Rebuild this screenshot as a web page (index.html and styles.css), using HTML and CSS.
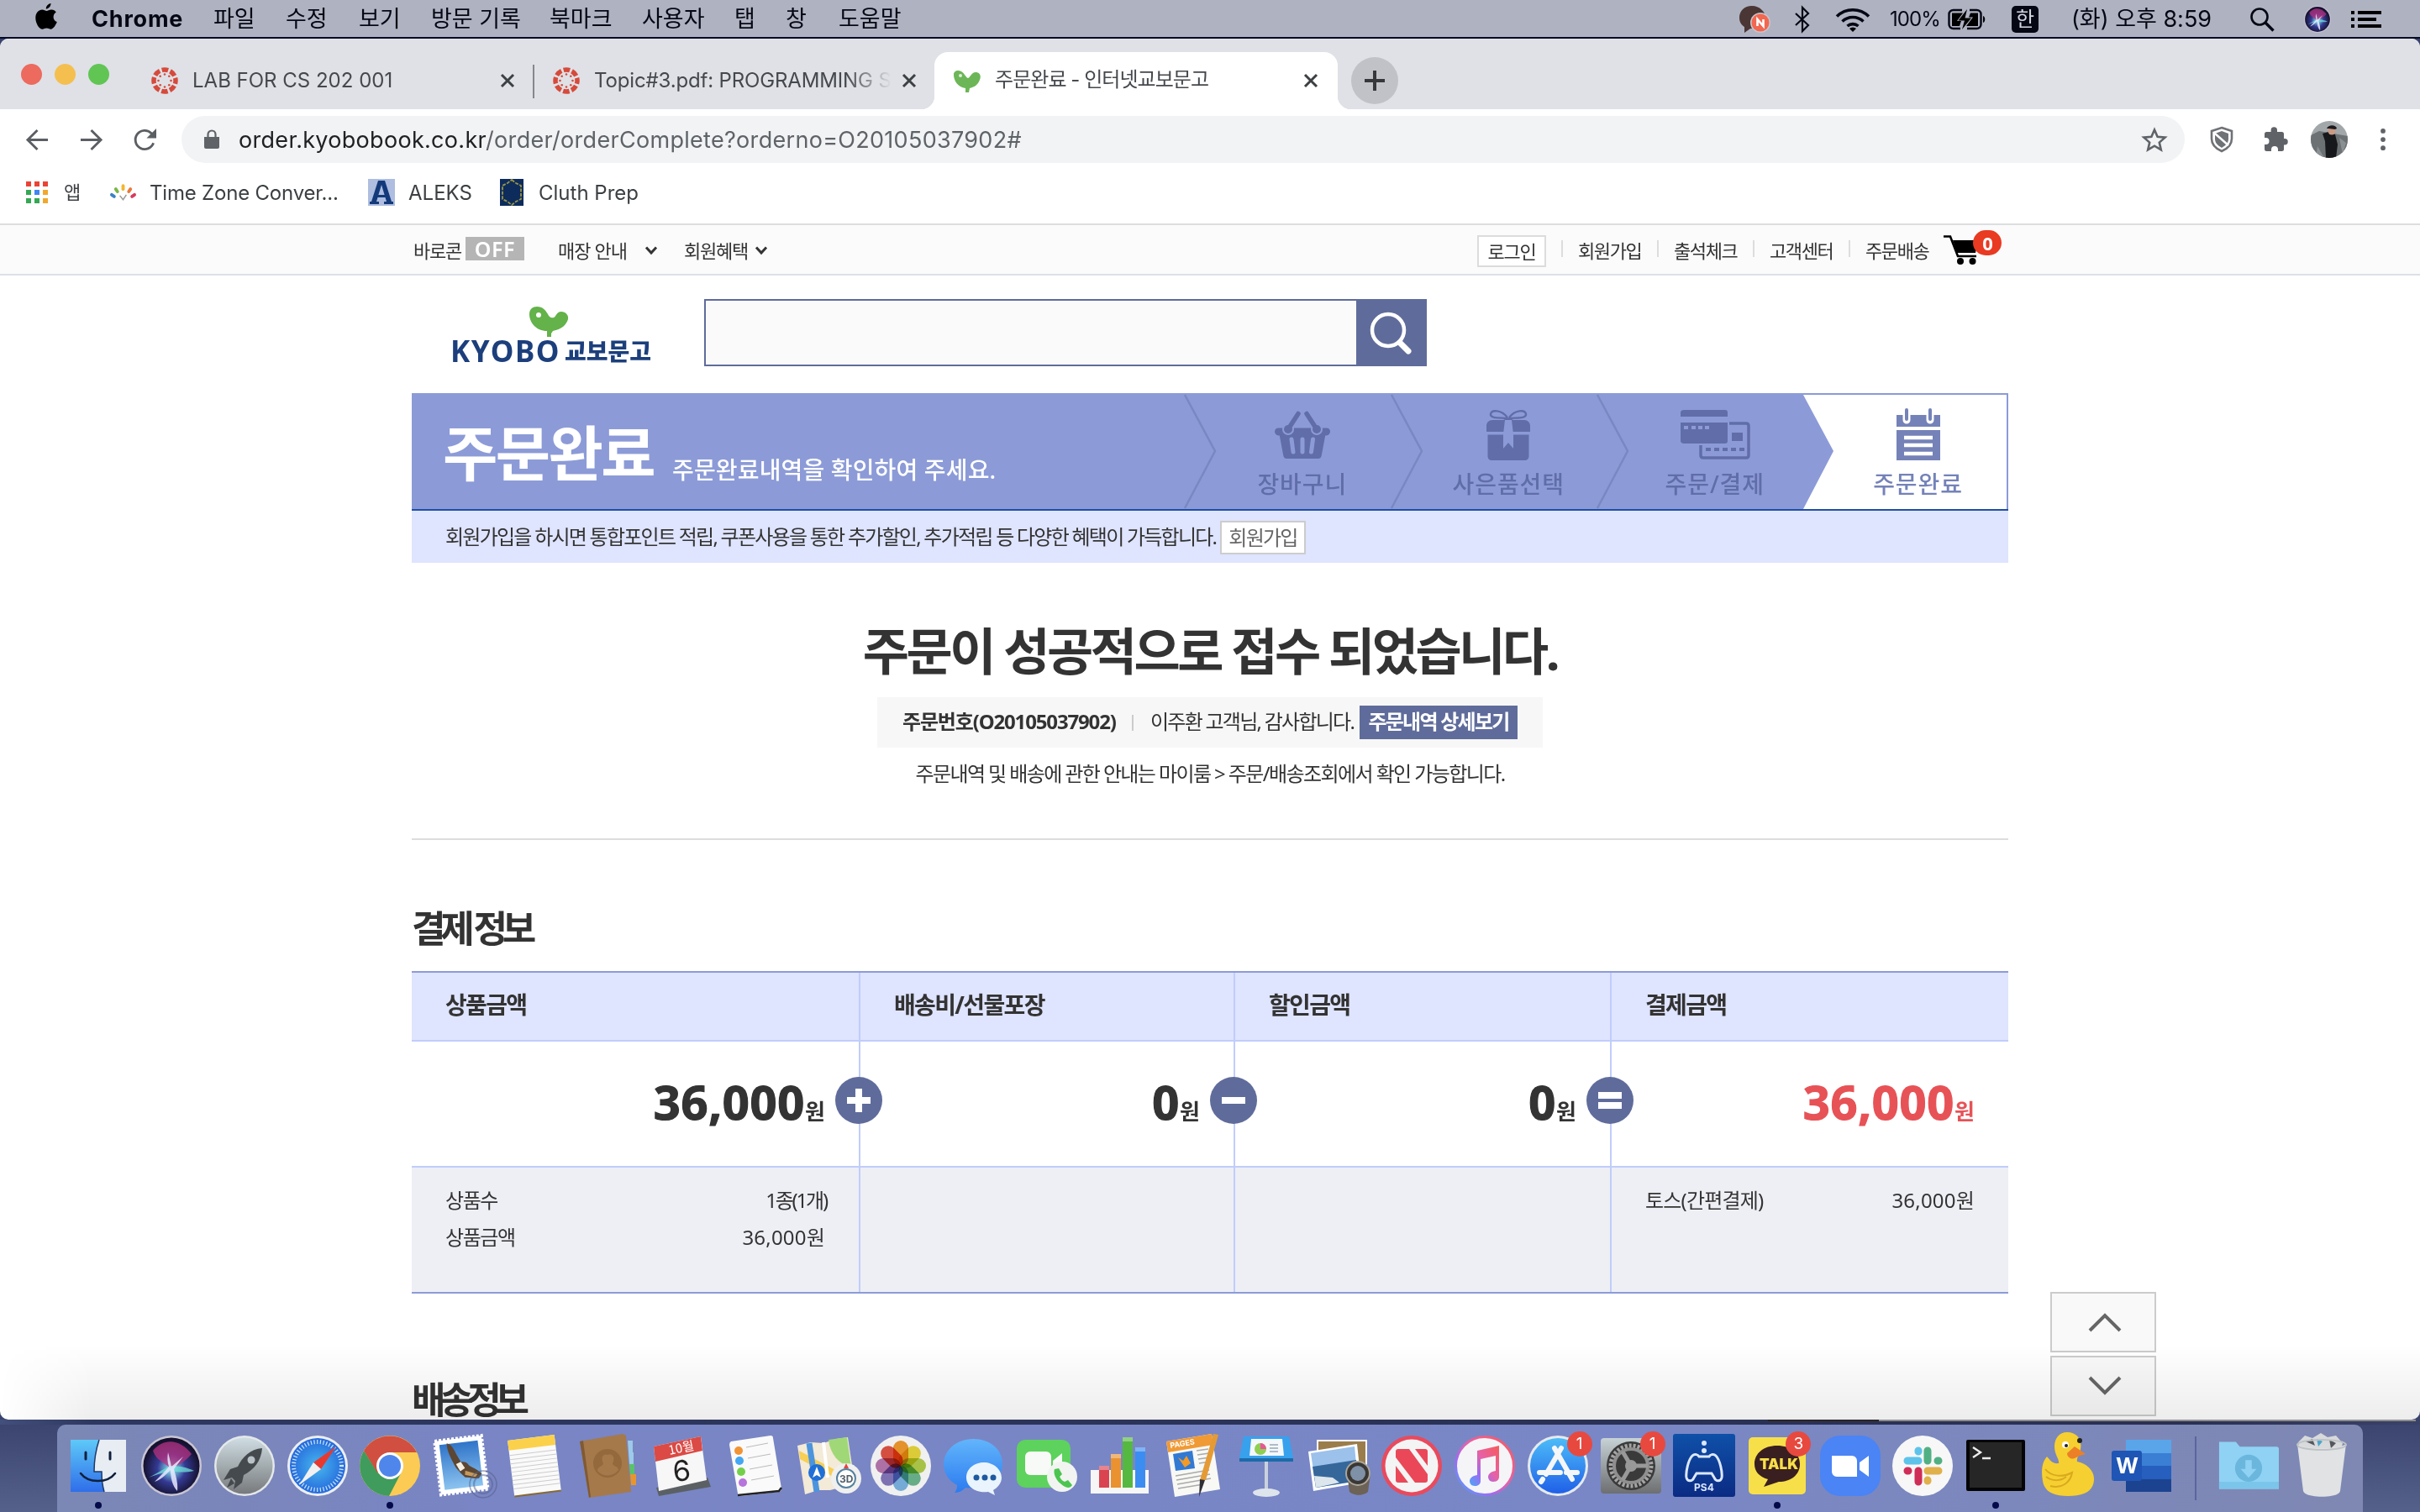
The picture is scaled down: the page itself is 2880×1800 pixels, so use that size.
FILE: index.html
```html
<!DOCTYPE html>
<html lang="ko">
<head>
<meta charset="utf-8">
<title>주문완료 - 인터넷교보문고</title>
<link rel="stylesheet" href="styles.css">
</head>
<body>
<header class="menubar">
  <svg class="apple" viewBox="0 0 26 32"><path d="M18.500 0c.3 3-2.600 6.600-5.700 6.600C12.500 3.500 15.500.4 18.500 0zM13.500 9c1.300 0 3.300-1.700 6-1.500 2.100.1 4.100 1.100 5.300 2.900-4.800 3-4 9.700 1 11.700-1.200 3.500-4.300 8.700-7.300 8.700-2 0-2.900-1.200-5-1.200-2.200 0-3.200 1.200-5 1.200C4.500 30.800.3 23.500.3 17.500.3 11 4.400 7.600 8.100 7.600c2.200 0 4 1.400 5.400 1.400z"/></svg>
  <nav class="menus">
    <b>Chrome</b><span>파일</span><span>수정</span><span>보기</span><span>방문 기록</span><span>북마크</span><span>사용자</span><span>탭</span><span>창</span><span>도움말</span>
  </nav>
  <div class="status">
    <svg class="st-talk" viewBox="0 0 38 34"><path d="M15 1C6 1 0 7 0 15c0 6 3 9 6 11v7l7-5h5c8 0 13-6 13-13S24 1 15 1z" fill="#4a3634"/><circle cx="25" cy="21" r="12" fill="#c9c5cc"/><circle cx="25" cy="21" r="10.500" fill="#f26750"/><path d="M21.500 25v-8l7 8v-8" fill="none" stroke="#fff" stroke-width="2.600"/></svg>
    <svg class="st-bt" viewBox="0 0 20 32"><path d="M2 9l15 14-7 7V2l7 7L2 23" fill="none" stroke="#050714" stroke-width="2.200"/></svg>
    <svg class="st-wifi" viewBox="0 0 42 30"><g fill="none" stroke="#050714" stroke-width="3.600"><path d="M2 11.500a27 27 0 0 1 38 0"/><path d="M8.500 17.500a18 18 0 0 1 25 0"/><path d="M14.500 23a10 10 0 0 1 13 0"/></g><path d="M17 26l4 4 4-4a6 6 0 0 0-8 0z"/></svg>
    <span class="st-pct">100%</span>
    <svg class="st-bat" viewBox="0 0 46 26"><path d="M17 2H6.500a5 5 0 0 0-5 5v12a5 5 0 0 0 5 5H15M26 2h8.500a5 5 0 0 1 5 5v12a5 5 0 0 1-5 5H23" fill="none" stroke="#050714" stroke-width="2.400"/><path d="M42 9v8c3-1 3-7 0-8z"/><path d="M5 5.500h13L11 15h5l-2 6H5zM36 5.500H27l-2 5h5L22 21h14z"/><path d="M23 1L12.500 14.500H20L17 25l11-13.500h-7.500z"/></svg>
    <span class="st-han">한</span>
    <span class="st-time">(화) 오후 8:59</span>
    <svg class="st-find" viewBox="0 0 32 30"><circle cx="12" cy="12" r="9.500" fill="none" stroke="#050714" stroke-width="2.600"/><path d="M19 19l9.500 9.500" stroke="#050714" stroke-width="3.400"/></svg>
    <svg class="st-siri" viewBox="0 0 72 72"><use href="#siri"/></svg>
    <svg class="st-list" viewBox="0 0 36 22"><path d="M0 1h4v4H0zM8 1h28v4H8zM0 9h4v4H0zM8 9h22v4H8zM0 17h4v4H0zM8 17h28v4H8z"/></svg>
  </div>
</header>

<main class="window">
  <div class="tabstrip">
    <div class="lights"><i class="red"></i><i class="amber"></i><i class="green"></i></div>
    <div class="tab tab-a">
      <svg class="fav" viewBox="0 0 32 32"><use href="#canvas-ring"/></svg>
      <span class="tab-t">LAB FOR CS 202 001</span>
      <svg class="x" viewBox="0 0 18 18"><path d="M2 2l14 14M16 2L2 16"/></svg>
    </div>
    <div class="tab tab-b">
      <svg class="fav" viewBox="0 0 32 32"><use href="#canvas-ring"/></svg>
      <span class="tab-t">Topic#3.pdf: PROGRAMMING S</span>
      <svg class="x" viewBox="0 0 18 18"><path d="M2 2l14 14M16 2L2 16"/></svg>
    </div>
    <div class="tab tab-on">
      <svg class="fav" viewBox="0 0 32 32"><use href="#sprout"/></svg>
      <span class="tab-t">주문완료 - 인터넷교보문고</span>
      <svg class="x" viewBox="0 0 18 18"><path d="M2 2l14 14M16 2L2 16"/></svg>
    </div>
    <div class="newtab"><svg viewBox="0 0 24 24"><path d="M12 0v24M0 12h24"/></svg></div>
  </div>
  <div class="toolbar">
    <svg class="tb-back" viewBox="0 0 28 28"><path d="M27 14H3M14 2L2 14l12 12"/></svg>
    <svg class="tb-fwd" viewBox="0 0 28 28"><path d="M1 14h24M14 2l12 12-12 12"/></svg>
    <svg class="tb-load" viewBox="0 0 28 28"><path d="M24.500 18A11.500 11.500 0 1 1 22 6l4 4"/><path class="fill" d="M28 0v12H16z"/></svg>
    <div class="omnibox">
      <svg class="lock" viewBox="0 0 18 24"><path d="M0 9h18v12a2 2 0 0 1-2 2H2a2 2 0 0 1-2-2z" fill="#5f6368"/><path d="M4.500 10V6a4.500 4.500 0 0 1 9 0v4" fill="none" stroke="#5f6368" stroke-width="2.200"/></svg>
      <span class="url"><span class="host">order.kyobobook.co.kr</span><span class="path">/order/orderComplete?orderno=O20105037902#</span></span>
      <svg class="star" viewBox="0 0 30 28"><path d="M15 2.500l3.600 8.300 9 .8-6.800 6 2 8.800-7.800-4.700-7.800 4.700 2-8.800-6.800-6 9-.8z"/></svg>
    </div>
    <svg class="tb-shield" viewBox="0 0 30 32"><path d="M15 2l12 4v9c0 7-5 12-12 15C8 27 3 22 3 15V6z" fill="none" stroke="#6f7276" stroke-width="2.600"/><path d="M15 6l8 3v6c0 5-3 8-8 11-5-3-8-6-8-11V9z" fill="#6f7276"/><path d="M7 9l16 14" stroke="#fff" stroke-width="2.500"/></svg>
    <svg class="tb-puz" viewBox="0 0 30 30"><path d="M25 14h-1V8.500A2.500 2.500 0 0 0 21.500 6H16V4a3.700 3.700 0 0 0-7.400 0v2H3.500A2.500 2.500 0 0 0 1 8.500V13h1.500a4 4 0 0 1 0 8H1v5.500A2.500 2.500 0 0 0 3.500 29H9v-2a4 4 0 0 1 8 0v2h4.500a2.500 2.500 0 0 0 2.500-2.500v-5h1a3.700 3.700 0 0 0 0-7.500z" fill="#5f6368"/></svg>
    <svg class="tb-ava" viewBox="0 0 44 44"><defs><clipPath id="ac"><circle cx="22" cy="22" r="22"/></clipPath></defs><g clip-path="url(#ac)"><path fill="#a2a7a9" d="M0 0h44v44H0z"/><path fill="#6c7174" d="M0 17l10-5 34 6v26H0z"/><path d="M8 30l8 14H6zM34 20l8 6-4 14z" fill="#8b9093"/><path d="M14 15l7-2 8 3 3 12-2 16H18l-1-20z" fill="#17181b"/><circle cx="25" cy="12" r="4.500" fill="#c99a86"/><path d="M19 9c2-5 11-5 12 0l-2 1-8-1z" fill="#1b1a1d"/></g></svg>
    <svg class="tb-dots" viewBox="0 0 6 28"><circle cx="3" cy="3" r="3"/><circle cx="3" cy="13.500" r="3"/><circle cx="3" cy="24" r="3"/></svg>
  </div>
  <div class="bookmarks">
    <svg class="bm-apps" viewBox="0 0 26 26"><path fill="#ea4335" d="M0 0h6v6H0zM10 0h6v6h-6zM20 0h6v6h-6z"/><path fill="#34a853" d="M0 10h6v6H0zM0 20h6v6H0z"/><path fill="#4285f4" d="M10 10h6v6h-6z"/><path fill="#34a853" d="M10 20h6v6h-6z"/><path fill="#f0a92e" d="M20 10h6v6h-6zM20 20h6v6h-6z"/></svg>
    <span class="bm-t1">앱</span>
    <svg class="bm-tz" viewBox="0 0 32 20"><g stroke-width="4" stroke-linecap="round"><path stroke="#3b82c4" d="M2 13l3 2"/><path stroke="#7ab648" d="M7 6l2 3"/><path stroke="#f2b632" d="M16 2v4"/><path stroke="#e9793a" d="M25 6l-2 3"/><path stroke="#d73b5e" d="M30 13l-3 2"/></g><path d="M12 14l4 5 4-6" fill="none" stroke="#999" stroke-width="1.500"/></svg>
    <span class="bm-t2">Time Zone Conver...</span>
    <svg class="bm-al" viewBox="0 0 32 32"><path fill="#aebde0" d="M0 0h32v32H0z"/><path fill="#143a7b" fill-rule="evenodd" d="M12 2h8l8 25h2v3H19v-3h3l-1.500-5h-9L10 27h3v3H2v-3h2zM16 7l-3.600 12h7.200z"/></svg>
    <span class="bm-t3">ALEKS</span>
    <svg class="bm-cl" viewBox="0 0 28 32"><path fill="#0d2c5c" d="M0 0h28v32H0z"/><path d="M14 1l5 4 6 3v16l-6 3-5 4-5-4-6-3V8l6-3z" fill="#0d2c5c" stroke="#9a9546" stroke-width="1.800" stroke-dasharray="4 1.500"/></svg>
    <span class="bm-t4">Cluth Prep</span>
  </div>

  <div class="page">
    <div class="util">
      <div class="wrap util-row">
        <div class="util-l">
          <span class="u1">바로콘</span><span class="off">OFF</span>
          <span class="u2">매장 안내</span><svg class="chev c1" viewBox="0 0 16 10"><path d="M2 1.500l6 6.500 6-6.500"/></svg>
          <span class="u3">회원혜택</span><svg class="chev c2" viewBox="0 0 16 10"><path d="M2 1.500l6 6.500 6-6.500"/></svg>
        </div>
        <div class="util-r">
          <span class="login">로그인</span><i></i><span class="ut">회원가입</span><i></i><span class="ut">출석체크</span><i></i><span class="ut">고객센터</span><i></i><span class="ut">주문배송</span>
          <div class="cart"><svg viewBox="0 0 44 36"><path d="M0 1.500h8L17 25h22" fill="none" stroke="#000" stroke-width="2.600"/><path d="M11 6h30l-3 15H16z"/><circle cx="20" cy="31" r="4"/><circle cx="34.500" cy="31" r="4"/></svg><b>0</b></div>
        </div>
      </div>
    </div>

    <div class="wrap head">
      <div class="logo">
        <svg class="bird" viewBox="0 0 46 36"><path d="M0 9C0 3 4 0 9 0c7 0 10 4 13 9 2 4 4 5 7 4 3-1 3-7 9-7 5 0 9 4 8 9-2 7-8 12-18 14l-2 3v4h-5v-7C8 29 0 19 0 9z" fill="#63b24a"/><circle cx="11" cy="10" r="3" fill="#fff"/></svg>
        <div class="wordmark"><b class="w1">KYOBO</b><b class="w2">교보문고</b></div>
      </div>
      <div class="search"><div class="field"></div><div class="go"><svg viewBox="0 0 52 52"><circle cx="22" cy="22" r="19" fill="none" stroke="#fff" stroke-width="4.500"/><path d="M36 37l10 10" stroke="#fff" stroke-width="7" stroke-linecap="round"/></svg></div></div>
    </div>

    <div class="wrap banner">
      <div class="ban-t"><b>주문완료</b><span>주문완료내역을 확인하여 주세요.</span></div>
      <div class="step"><svg class="arrow" viewBox="0 0 40 138"><path d="M1 2l36 67L1 137"/></svg>
        <svg class="s-ic" viewBox="0 0 82 60"><path d="M12.500 21.500h57c6 0 6 8.500 0 9h-1.300l-4.500 24c-.5 2.500-2 3.500-4 3.500H22.300c-2 0-3.500-1-4-3.500l-4.500-24h-1.300c-6-.5-6-9 0-9z" fill="#606da8"/><circle cx="24" cy="23" r="7" fill="#8c9bd7"/><circle cx="58" cy="23" r="7" fill="#8c9bd7"/><path d="M36 4.500L24 23M46 4.500L58 23" stroke="#606da8" stroke-width="5.500" stroke-linecap="round"/><circle cx="24" cy="23" r="5" fill="#606da8"/><circle cx="58" cy="23" r="5" fill="#606da8"/><path d="M28 35l2 15M41 35v15M53.500 35l-2 15" stroke="#8c9bd7" stroke-width="5" stroke-linecap="round"/></svg>
        <span class="sl">장바구니</span></div>
      <div class="step"><svg class="arrow" viewBox="0 0 40 138"><path d="M1 2l36 67L1 137"/></svg>
        <svg class="s-ic" viewBox="0 0 82 60"><path d="M40 10C34 9 19 11 20 5 21-1 33 0 40 9M42 10C48 9 63 11 62 5 61-1 49 0 42 9" fill="none" stroke="#606da8" stroke-width="2.400"/><path d="M22 12h13l6-3 6 3h13c4 0 7 3 7 7v7H15v-7c0-4 3-7 7-7zM16.500 29.500h49V55c0 3-2 5-5 5h-39c-3 0-5-2-5-5z" fill="#606da8"/><path d="M37 12h8l2 17v17l-6-7-6 7V29z" fill="#8c9bd7"/></svg>
        <span class="sl">사은품선택</span></div>
      <div class="step"><svg class="arrow" viewBox="0 0 40 138"><path d="M1 2l36 67L1 137"/></svg>
        <svg class="s-ic" viewBox="0 0 82 60"><path d="M4 0h49c2 0 3 1 3 3v5H0V3c0-2 2-3 4-3zM0 15h56v22c0 2-1 3-3 3H4c-2 0-4-1-4-3z" fill="#606da8"/><path d="M4 21h5M13 21h5M21 21h5M29 21h5" stroke="#8c9bd7" stroke-width="4"/><path d="M58 16h20c2 0 3 1 3 3v35c0 2-1 3-3 3H27c-2 0-3-1-3-3V42" fill="none" stroke="#606da8" stroke-width="3.500"/><path d="M61 27h13v10H61z" fill="#606da8"/><path d="M30 47h46" stroke="#606da8" stroke-width="4" stroke-dasharray="6 4"/></svg>
        <span class="sl">주문/결제</span></div>
      <div class="step on"><svg class="arrow-on" viewBox="0 0 244 138"><path d="M0 2h242v136H0l36-69z" fill="#fff"/></svg>
        <svg class="s-ic" viewBox="0 0 82 60"><path d="M15 6h52v14H15zM15 24h52v36H15z" fill="#7482b8"/><path d="M27 0v12M55 0v12" stroke="#fff" stroke-width="9" stroke-linecap="round"/><path d="M27 0v11M55 0v11" stroke="#7482b8" stroke-width="4" stroke-linecap="round"/><path d="M24 33h34M24 42h34M24 52h34" stroke="#fff" stroke-width="4.500"/></svg>
        <span class="sl">주문완료</span></div>
    </div>
    <div class="wrap notice"><span>회원가입을 하시면 통합포인트 적립, 쿠폰사용을 통한 추가할인, 추가적립 등 다양한 혜택이 가득합니다.</span><a>회원가입</a></div>

    <div class="wrap done">
      <h1>주문이 성공적으로 접수 되었습니다.</h1>
      <div class="order"><b class="no">주문번호(O20105037902)</b><i></i><span class="thx">이주환 고객님, 감사합니다.</span><b class="detail">주문내역 상세보기</b></div>
      <p>주문내역 및 배송에 관한 안내는 마이룸 &gt; 주문/배송조회에서 확인 가능합니다.</p>
    </div>

    <h2 class="wrap h-pay">결제 정보</h2>
    <div class="wrap pay">
      <div class="th">상품금액</div><div class="th">배송비/선물포장</div><div class="th">할인금액</div><div class="th">결제금액</div>
      <div class="sum"><b class="num">36,000</b><b class="won">원</b><svg class="op" viewBox="0 0 56 56"><circle cx="28" cy="28" r="28"/><path d="M14 28h28M28 14v28"/></svg></div>
      <div class="sum"><b class="num">0</b><b class="won">원</b><svg class="op" viewBox="0 0 56 56"><circle cx="28" cy="28" r="28"/><path d="M14 28h28"/></svg></div>
      <div class="sum"><b class="num">0</b><b class="won">원</b><svg class="op" viewBox="0 0 56 56"><circle cx="28" cy="28" r="28"/><path d="M14 22h28M14 34h28"/></svg></div>
      <div class="sum total"><b class="num">36,000</b><b class="won">원</b></div>
      <div class="det"><p><span>상품수</span><span class="qty">1종(1개)</span></p><p><span>상품금액</span><span class="amt">36,000원</span></p></div>
      <div class="det"></div><div class="det"></div>
      <div class="det"><p><span class="toss">토스(간편결제)</span><span class="amt">36,000원</span></p></div>
    </div>
    <h2 class="wrap h-ship">배송정보</h2>
    <div class="jump"><a><svg viewBox="0 0 40 24"><path d="M2 22L20 4l18 18"/></svg></a><a><svg viewBox="0 0 40 24"><path d="M2 2l18 18L38 2"/></svg></a></div>
    <div class="shade"></div>
  </div>
</main>

<footer class="dock">
  <div class="app run"><svg viewBox="0 0 72 72"><path d="M3 5h66v62H3z" fill="url(#fb)"/><path d="M37 5h32v62H43c-2-7-3-16-3-24h-9c0-13 2-26 6-38z" fill="#e8edf4"/><path d="M37 5c-4 12-6 25-6 38h9c0 8 1 17 3 24" fill="none" stroke="#1f3a68" stroke-width="1.500"/><path d="M21 20v8M50 20v8" stroke="#10203c" stroke-width="3" stroke-linecap="round"/><path d="M15 45c9 12 32 12 41 0" fill="none" stroke="#10203c" stroke-width="2.600" stroke-linecap="round"/></svg></div>
  <div class="app"><svg viewBox="0 0 72 72"><use href="#siri"/></svg></div>
  <div class="app"><svg viewBox="0 0 72 72"><circle cx="36" cy="36" r="36" fill="#e4e8ea"/><circle cx="36" cy="36" r="33.500" fill="url(#lp)"/><path d="M57 15c-14 1-24 11-29 22l-9 3-8 13 10-3 4 4-2 10 10-8 2-9c12-6 21-17 22-32z" fill="#454a4f"/><path d="M20 51l-5 11 9-5z" fill="#454a4f"/><circle cx="44" cy="29" r="4.500" fill="#b9c3c7"/></svg></div>
  <div class="app"><svg viewBox="0 0 72 72"><circle cx="36" cy="36" r="36" fill="#eceff2"/><circle cx="36" cy="36" r="33" fill="url(#sf)"/><circle cx="36" cy="36" r="28.500" fill="none" stroke="#cfe6fb" stroke-width="5" stroke-dasharray="1.200 2.500"/><path d="M58 13L31 32l9 8z" fill="#e8392f"/><path d="M14 59l17-27 9 8z" fill="#f1f1f1"/></svg></div>
  <div class="app run"><svg viewBox="0 0 72 72"><circle cx="36" cy="36" r="36" fill="#fbcb53"/><path d="M36 20h32A36 36 0 0 0 5 18l16 27z" fill="#d04f41"/><path d="M5 18A36 36 0 0 0 35 72l14-27-13 7-15-8z" fill="#3f9c5c"/><circle cx="36" cy="36" r="16" fill="#fff"/><circle cx="36" cy="36" r="13" fill="#4f86ec"/></svg></div>
  <div class="app"><svg viewBox="0 0 72 72"><g transform="rotate(-7 36 36)"><path d="M6 3h56v64H6z" fill="#fff" stroke="#fff" stroke-width="4" stroke-dasharray="3 2"/><path d="M11 8h46v54H11z" fill="url(#ml)"/><path d="M20 7c6 2 8 9 10 15l4 9c4 0 7 1 9 5 4 4 10 6 14 12l-4 5c-6 0-11-3-16-3l-5-6c-2-4-5-6-6-10-3-9-7-18-6-27z" fill="#5d4632"/><path d="M28 33l6-2 4 8-6 3z" fill="#f5efe4"/><path d="M38 42l14 6-3 3-12-4z" fill="#c49a5c"/></g><circle cx="60" cy="58" r="16" fill="none" stroke="#56618c" stroke-width="1.500" opacity=".6"/><circle cx="60" cy="58" r="11" fill="none" stroke="#56618c" stroke-width="2" opacity=".5"/></svg></div>
  <div class="app"><svg viewBox="0 0 72 72"><g transform="rotate(-7 36 36)"><path d="M6 2h56v67H6z" fill="#fafafa"/><path d="M6 2h56v12H6z" fill="#fbd14b"/><path d="M6 20h56M6 25h56M6 30h56M6 35h56M6 40h56M6 45h56M6 50h56M6 55h56M6 60h56" stroke="#ccc"/><path d="M6 69h56" stroke="#866a35" stroke-width="2"/></g></svg></div>
  <div class="app"><svg viewBox="0 0 72 72"><path d="M58 6h6v14h-5zM59 20h6v14h-5z" fill="#9dcae8"/><path d="M60 34h6v12h-5z" fill="#59c36a"/><path d="M61 46h7v13h-6z" fill="#e9952d"/><path d="M1 7L52-2l4 2 6 67-50 7z" fill="#a5794a"/><path d="M1 7l4-1 9 67-2 1z" fill="#805a34"/><circle cx="34" cy="33" r="17" fill="#94693c"/><path d="M22 42c0-6 7-5 7-9-4-8 1-12 5-10 5-3 10 3 6 10 0 4 7 3 7 8-6 8-18 9-25 1z" fill="#a5794a"/></svg></div>
  <div class="app"><svg viewBox="0 0 72 72"><path d="M5 62l61-12 4 11-62 11z" fill="#5b6064"/><path d="M2 13L58 1l7 52L8 66z" fill="#f7f7f7"/><path d="M2 13L58 1l2 17L4 31z" fill="#db4a45"/><text x="20" y="21" transform="rotate(-12 30 18)" class="cal-m">10월</text><text x="25" y="54" transform="rotate(-6 35 45)" class="cal-d">6</text></svg></div>
  <div class="app"><svg viewBox="0 0 72 72"><path d="M7 7L54 0q3 0 3 3l10 60q0 3-3 4L19 72q-4 0-4-3L5 11q0-3 2-4z" fill="#fafafa"/><path d="M15 71l49-5 3-4" fill="none" stroke="#222" stroke-width="2.500"/><circle cx="16" cy="18" r="5" fill="#f19435"/><circle cx="17" cy="30" r="5" fill="#44a7f2"/><circle cx="19" cy="43" r="5" fill="#74d04b"/><circle cx="21" cy="56" r="5" fill="#b873dc"/><path d="M25 14l26-5M27 27l27-5M29 40l27-5M31 53l27-5" stroke="#bbb"/></svg></div>
  <div class="app"><svg viewBox="0 0 72 72"><path d="M-1 12l16-4 15 1 15-5 14-2 9 60-15-1-15 4-14 0-16 5z" fill="#f3ead7"/><path d="M36 5l22-3 5 36C48 34 38 22 36 5z" fill="#a0d878"/><path d="M2 28l60 32-1-10L1 18z" fill="#f7cf55"/><path d="M13 9l9 58" stroke="#4c95dd" stroke-width="7"/><path d="M30 8l5 42" stroke="#fff" stroke-width="4"/><circle cx="22" cy="44" r="10" fill="#1f6fd6"/><path d="M22 37l5 13-5-3-5 3z" fill="#fff"/><circle cx="57" cy="51" r="18" fill="#f0f0ef"/><circle cx="57" cy="51" r="11" fill="#fff" stroke="#54809f" stroke-width="2"/><path d="M54 39l3-6 3 6z" fill="#e2453a"/><text x="49" y="55.500" class="t3d">3D</text></svg></div>
  <div class="app"><svg viewBox="0 0 72 72"><circle cx="36" cy="36" r="36" fill="#f0f0f0"/><g class="petals"><rect x="27" y="6" width="18" height="30" rx="9" fill="#f29b2e"/><rect x="27" y="6" width="18" height="30" rx="9" fill="#e9d83b" transform="rotate(45 36 36)"/><rect x="27" y="6" width="18" height="30" rx="9" fill="#b2ce4b" transform="rotate(90 36 36)"/><rect x="27" y="6" width="18" height="30" rx="9" fill="#6cb78e" transform="rotate(135 36 36)"/><rect x="27" y="6" width="18" height="30" rx="9" fill="#7db5e4" transform="rotate(180 36 36)"/><rect x="27" y="6" width="18" height="30" rx="9" fill="#8578bd" transform="rotate(225 36 36)"/><rect x="27" y="6" width="18" height="30" rx="9" fill="#b878b0" transform="rotate(270 36 36)"/><rect x="27" y="6" width="18" height="30" rx="9" fill="#e25444" transform="rotate(315 36 36)"/></g></svg></div>
  <div class="app"><svg viewBox="0 0 72 72"><path d="M35 4C15 4 0 18 0 34c0 12 7 20 16 25 0 5-2 8-3 9 6 0 10-3 13-6 25 4 44-10 44-28S55 4 35 4z" fill="url(#ms)"/><path d="M48 32c11 0 21 8 21 18 0 7-5 12-10 15l2 6-8-4c-14 2-26-6-26-17s10-18 21-18z" fill="#e9f4fc"/><circle cx="39" cy="50" r="3.500" fill="#1d59a0"/><circle cx="49" cy="50" r="3.500" fill="#1d59a0"/><circle cx="59" cy="50" r="3.500" fill="#1d59a0"/></svg></div>
  <div class="app"><svg viewBox="0 0 72 72"><rect x="0" y="5" width="64" height="57" rx="10" fill="#5dd25c"/><rect x="10" y="19" width="31" height="28" rx="6" fill="#f8faf8"/><path d="M43 30l11-9v26l-11-8z" fill="#f8faf8"/><circle cx="54" cy="49" r="18" fill="#f1f4f1"/><path d="M45 40l5-1 4 7-3 3c2 4 4 5 6 6l4-2 5 6c-3 5-9 3-14-2-5-4-9-12-7-17z" fill="#4bc54f"/></svg></div>
  <div class="app"><svg viewBox="0 0 72 72"><path d="M1 41h69v28H1z" fill="#f6f6f6"/><path d="M11 36h12v26H11z" fill="#d94450"/><path d="M25 22h12v40H25z" fill="#e9922f"/><path d="M39 2h12v60H39z" fill="#55b840"/><path d="M54 14h12v48H54z" fill="#3c8df2"/><path d="M11 36h12v5H11zM25 22h12v5H25zM39 2h12v5H39zM54 14h12v5H54z" fill="#fff" opacity=".35"/></svg></div>
  <div class="app"><svg viewBox="0 0 72 72"><path d="M4 7L58-2l10 66-54 9z" fill="#f8f8f5"/><path d="M4 7L58-2l2 13L6 20z" fill="#f09a35"/><text x="9" y="15" transform="rotate(-9 9 15)" class="pages">PAGES</text><path d="M12 22l23-4 3 21-23 3z" fill="#3279d4"/><path d="M18 26l6 4 4-6 5 9-7 5z" fill="#f39a27"/><path d="M40 18l14-2M41 23l14-2M42 28l14-2M43 33l14-2M15 48l40-7M16 53l40-7M17 58l40-7M18 63l30-5" stroke="#aaa" stroke-width="1.500"/><path d="M60-2l6 1-15 54-7 0z" fill="#e59b35"/><path d="M44 52l6 1-7 20z" fill="#303034"/></svg></div>
  <div class="app"><svg viewBox="0 0 72 72"><path d="M34 29h4v40h-4z" fill="#c9d2dc"/><ellipse cx="36" cy="68" rx="16" ry="5" fill="#dde4ec"/><path d="M9 1h54l5 26v3H4v-3z" fill="#37a1ee"/><path d="M4 27h64v4H4z" fill="#1d6ba8"/><path d="M18 4h37l2 20H16z" fill="#f5f8fa"/><circle cx="29" cy="16" r="7" fill="#8fce52"/><path d="M29 16V9a7 7 0 0 1 7 7z" fill="#e95698"/><path d="M40 11h10M40 15h10M40 19h10" stroke="#96a8b8" stroke-width="1.500"/></svg></div>
  <div class="app"><svg viewBox="0 0 72 72"><path d="M9 5h60v46H9z" fill="#fff"/><path d="M11 7h56v42H11z" fill="#9b7d4c"/><path d="M-1 19l58-9 5 46-57 10z" fill="#fff"/><path d="M2 21l52-8 4 41-50 8z" fill="#9cc1ea"/><path d="M4 37l52-8 2 25-50 8z" fill="#35679b"/><path d="M6 48l22 2 8 6-28 6z" fill="#dce6ec"/><path d="M45 45h28l-3 22c-6 5-16 5-22 0z" fill="#6c6255"/><circle cx="58" cy="45" r="14" fill="#3a3734" stroke="#aaa59c" stroke-width="2"/><circle cx="58" cy="45" r="9" fill="#7f91a6"/></svg></div>
  <div class="app"><svg viewBox="0 0 72 72"><circle cx="36" cy="36" r="36" fill="#e94a5d"/><circle cx="36" cy="36" r="31.500" fill="#f4f4f4"/><path d="M17 19a3 3 0 0 1 3-3h13l22 30v7a3 3 0 0 1-3 3H40L17 26zM40 16h12a3 3 0 0 1 3 3v17zM17 36l15 20H20a3 3 0 0 1-3-3z" fill="#ea4858"/></svg></div>
  <div class="app"><svg viewBox="0 0 72 72"><circle cx="36" cy="36" r="34.500" fill="#f5f5f8" stroke="url(#mu)" stroke-width="3"/><path d="M27 18l26-6v37c0 4-3 6-7 6s-6-3-6-6 3-6 9-7V24l-18 4v26c0 4-3 6-7 6s-6-3-6-6 3-6 9-7z" fill="url(#mu)"/></svg></div>
  <div class="app"><svg viewBox="0 0 72 72"><circle cx="36" cy="36" r="36" fill="#e6eaee"/><circle cx="36" cy="36" r="33" fill="url(#as)"/><path d="M32 15l21 37M40 15L22 46M14 44h25M46 44h13M18 52l-2 3" stroke="#f4f6f8" stroke-width="6" stroke-linecap="round"/></svg><em>1</em></div>
  <div class="app"><svg viewBox="0 0 72 72"><rect x="0" y="3" width="72" height="66" rx="4" fill="url(#gr)"/><circle cx="36" cy="36" r="29" fill="#3a3a3a"/><circle cx="36" cy="36" r="24" fill="none" stroke="#a4a4a4" stroke-width="5" stroke-dasharray="3 2"/><circle cx="36" cy="36" r="20" fill="none" stroke="#8f8f8f" stroke-width="4"/><circle cx="36" cy="36" r="7" fill="#999"/><path d="M36 36h20M36 36L26 19M36 36L26 53" stroke="#999" stroke-width="5"/></svg><em>1</em></div>
  <div class="app"><svg viewBox="0 0 72 72"><rect x="-1" y="-2" width="74" height="75" rx="3" fill="url(#ps)"/><circle cx="36" cy="9" r="3" fill="#dce8ff"/><circle cx="36" cy="18" r="3" fill="#dce8ff"/><path d="M22 24c3-3 7-1 8 1h12c1-2 5-4 8-1 5 5 8 20 7 26-1 5-7 5-9 0l-3-5H27l-3 5c-2 5-8 5-9 0-1-6 2-21 7-26z" fill="none" stroke="#dce8ff" stroke-width="3"/><text x="24" y="66" class="ps4">PS4</text></svg></div>
  <div class="app run"><svg viewBox="0 0 72 72"><rect x="2" y="2" width="68" height="68" rx="5" fill="#f7df49"/><path d="M36 12c16 0 27 9 27 22S52 55 38 55L20 61l5-9C14 49 9 42 9 34c0-13 11-22 27-22z" fill="#3a1f20"/><text x="15" y="40" class="talk">TALK</text></svg><em>3</em></div>
  <div class="app"><svg viewBox="0 0 72 72"><rect width="72" height="72" rx="24" fill="#4a84f5"/><path d="M14 24h24a6 6 0 0 1 6 6v19H20a6 6 0 0 1-6-6zM47 32l11-8v25l-11-8z" fill="#fff"/></svg></div>
  <div class="app"><svg viewBox="0 0 72 72"><circle cx="36" cy="36" r="36" fill="#f7f7f7"/><g stroke-width="9" stroke-linecap="round"><path d="M18 30h13M31 18v1" stroke="#5dc3ea"/><path d="M42 18v12M54 30h1" stroke="#51b083"/><path d="M42 42h13M42 53v1" stroke="#e0b04a"/><path d="M31 42v13M18 42h1" stroke="#cf2d58"/></g></svg></div>
  <div class="app run"><svg viewBox="0 0 72 72"><rect x="1" y="5" width="70" height="61" rx="2" fill="#050505"/><path d="M5 8h62v54H5z" fill="#262626"/><path d="M9 14l9 6-9 6M20 27h10" fill="none" stroke="#eee" stroke-width="2.400"/></svg></div>
  <div class="app"><svg viewBox="0 0 72 72"><path d="M34-4c12 0 18 9 16 20-1 7-5 10-4 15 11 2 21 11 20 22-1 14-13 19-31 19-17 0-28-5-30-18C3 42 4 32 10 25c4 4 6 9 14 8 1-5-5-10-5-20C19 3 25-4 34-4z" fill="#f6d030"/><path d="M8 40c7 9 21 10 32 4-2 12-13 20-26 16M9 49c8 6 18 5 24 0" fill="none" stroke="#d9a91f" stroke-width="2"/><circle cx="32" cy="11" r="4" fill="#fff"/><circle cx="33" cy="12" r="2" fill="#222"/><circle cx="49" cy="6" r="3" fill="#222"/><path d="M34 21l9-8 13 9-7 2-6 3c-5 2-9-2-9-6z" fill="#ec8026"/></svg></div>
  <div class="app"><svg viewBox="0 0 72 72"><path d="M17 5h54v16H17z" fill="#5aa5ea"/><path d="M17 21h54v15H17z" fill="#3b7fd4"/><path d="M17 36h54v16H17z" fill="#265fbd"/><path d="M17 52h54v15H17z" fill="#1c438f"/><rect x="0" y="18" width="36" height="36" rx="3" fill="#1f55b4"/><text x="5" y="45" class="word">W</text></svg></div>
  <i class="split"></i>
  <div class="app"><svg viewBox="0 0 76 72"><path d="M1 6h21l5 6h46a3 3 0 0 1 3 3v50H1z" fill="#8fd2f4"/><path d="M1 56h75v9H1z" fill="#7cc5ea"/><circle cx="38" cy="39" r="17" fill="#6bb6dc"/><path d="M34 29h8v11h6L38 51 28 40h6z" fill="#8fd2f4"/></svg></div>
  <div class="app"><svg viewBox="0 0 72 72"><path d="M8 8l8-8 9 3 10-6 8 5 10-2 8 9-2 8H10z" fill="#d8dadb"/><path d="M17 7l8-3 3 8zM45 5l8 4-6 6z" fill="#54585c"/><path d="M30 4l7 3-5 6z" fill="#4ba4cb"/><path d="M7 10c9 7 49 7 58 0l-7 56c-1 9-42 9-44 0z" fill="#e0e2e4"/><ellipse cx="36" cy="11" rx="29" ry="6" fill="none" stroke="#bfc3c7" stroke-width="2"/></svg></div>
</footer>

<svg class="defs" width="0" height="0">
  <defs>
    <linearGradient id="fb" x2="0" y2="1"><stop stop-color="#5ec9f8"/><stop offset="1" stop-color="#2f6eea"/></linearGradient>
    <linearGradient id="lp" x2="0" y2="1"><stop stop-color="#cfdde2"/><stop offset="1" stop-color="#777a7c"/></linearGradient>
    <radialGradient id="sf"><stop stop-color="#47b7ee"/><stop offset="1" stop-color="#2569dc"/></radialGradient>
    <linearGradient id="ml" x2="0" y2="1"><stop stop-color="#2f74c8"/><stop offset="1" stop-color="#8cc3f0"/></linearGradient>
    <linearGradient id="ms" x2="0" y2="1"><stop stop-color="#62b5fb"/><stop offset="1" stop-color="#2b7bf0"/></linearGradient>
    <linearGradient id="as" x2="0" y2="1"><stop stop-color="#4cbcf8"/><stop offset="1" stop-color="#2060e8"/></linearGradient>
    <linearGradient id="gr" x2="0" y2="1"><stop stop-color="#c7d2d6"/><stop offset="1" stop-color="#6d6e70"/></linearGradient>
    <linearGradient id="ps" x2="0" y2="1"><stop stop-color="#0f50a8"/><stop offset="1" stop-color="#0b2b83"/></linearGradient>
    <linearGradient id="mu" x1="1" x2="0" y2="1"><stop stop-color="#f85a5a"/><stop offset=".45" stop-color="#e562a8"/><stop offset=".7" stop-color="#9b6bf2"/><stop offset="1" stop-color="#4aa8f6"/></linearGradient>
    <radialGradient id="sr" cx=".5" cy=".55"><stop stop-color="#d8fbff"/><stop offset=".18" stop-color="#6fb4d6"/><stop offset=".5" stop-color="#343a94"/><stop offset="1" stop-color="#15112e"/></radialGradient>
    <symbol id="siri" viewBox="0 0 72 72"><circle cx="36" cy="36" r="36" fill="#c9c6d4"/><circle cx="36" cy="36" r="33.500" fill="url(#sr)"/><path d="M14 18C26 3 46 3 60 22 50 34 40 36 36 40 28 32 18 30 14 18z" fill="#b5317f" opacity=".75"/><path d="M9 50c12-6 20-12 26-14 10 0 20 2 28 6-10 2-18 2-25 0-10 1-18 4-29 8z" fill="#6fe0d8" opacity=".75"/><path d="M32 20c2 8 3 12 4 17l14-12-11 15c3 10 5 18 4 26-6-6-8-16-8-25-6 6-12 12-19 14 6-6 12-12 17-18-2-6-2-11-1-17z" fill="#e9e9ff" opacity=".85"/></symbol>
    <symbol id="canvas-ring" viewBox="0 0 32 32"><circle cx="16" cy="16" r="13" fill="none" stroke="#d64a3b" stroke-width="5.500" stroke-dasharray="7.600 2.610" stroke-dashoffset="3.800"/><g fill="#d64a3b"><circle cx="16" cy="8.500" r="1.300"/><circle cx="16" cy="23.500" r="1.300"/><circle cx="8.500" cy="16" r="1.300"/><circle cx="23.500" cy="16" r="1.300"/><circle cx="10.700" cy="10.700" r="1.300"/><circle cx="21.300" cy="10.700" r="1.300"/><circle cx="10.700" cy="21.300" r="1.300"/><circle cx="21.300" cy="21.300" r="1.300"/></g></symbol>
    <symbol id="sprout" viewBox="0 0 32 32"><path d="M0 9c0-5 5-6 9-4 4 2 5 7 8 8 3-1 4-7 9-7s7 4 5 9c-2 6-7 9-12 10l-1 5h-4v-5C5 24 0 16 0 9z" fill="#6cb657"/><circle cx="8" cy="10" r="2" fill="#dff0d8"/></symbol>
  </defs>
</svg>
</body>
</html>
```
FILE: styles.css
```css
* { box-sizing: border-box; }
body {
  margin: 0;
  width: 2880px;
  height: 1800px;
  overflow: hidden;
  display: flex;
  flex-direction: column;
  font-family: Inter, "Noto Sans CJK KR", sans-serif;
  color: #333;
  background:
    linear-gradient(90deg, #2b2524 132px, #8d8d90 132px) 2104px 1690px / 771px 2px no-repeat,
    linear-gradient(90deg, #434f7c 0, #2e3860 110px, #2b3358 1500px, #2b3052 2600px, #3a4267 2880px) 0 1690px / 2880px 6px no-repeat,
    linear-gradient(180deg, #39436e 1690px, #56618b 1800px);
}
svg { display: block; overflow: visible; flex: none; }
i, em { font-style: normal; }
span, b, a, h1, p { white-space: nowrap; }
.defs { position: absolute; }

/* system menu bar */
.menubar {
  height: 46px;
  flex: none;
  display: flex;
  background: #afb2c1;
  border-bottom: 2px solid #050a24;
  color: #050714;
  font-size: 27px;
  line-height: 45px;
}
.apple { width: 26px; height: 32px; margin: 4px 41px 0 42px; }
.menus { display: grid; grid-template-columns: 145px 86px 87px 86px 141px 110px 110px 61px 63px 80px; width: 1200px; flex: none; }
.menus b { font-weight: 700; letter-spacing: .8px; }
.status { display: grid; grid-template-columns: 65px 49px 65px 69px 76px 71px 212px 65px 56px 36px; margin-left: 761px; align-items: center; height: 44px; }
.st-talk { width: 38px; height: 34px; }
.st-bt { width: 20px; height: 32px; }
.st-wifi { width: 42px; height: 30px; }
.st-pct { font-size: 24px; letter-spacing: -.9px; }
.st-bat { width: 46px; height: 26px; }
.st-han { width: 32px; height: 32px; border-radius: 5px; background: #050714; color: #d5d7e0; font-size: 24px; line-height: 31px; text-align: center; }
.st-find { width: 32px; height: 30px; }
.st-siri { width: 32px; height: 32px; }
.st-list { width: 36px; height: 22px; }

/* browser window */
.window { height: 1644px; flex: none; border-radius: 10px; background: #fff; overflow: hidden; }
.tabstrip { height: 84px; padding-top: 16px; display: flex; background: #dfe1e6; }
.lights { display: flex; gap: 15px; padding: 14px 0 0 25px; width: 170px; }
.lights i { width: 25px; height: 25px; border-radius: 50%; }
.red { background: #ed6a5e; }
.amber { background: #f5bf4f; }
.green { background: #61c554; }
.tab { height: 68px; display: flex; align-items: center; font-size: 24px; line-height: 32px; color: #45484d; padding-left: 10px; }
.tab-a { width: 467px; position: relative; }
.tab-a::after { content: ""; width: 2px; height: 40px; background: #85878c; position: absolute; left: 464px; top: 15px; }
.tab-b { width: 475px; padding-left: 21px; }
.tab-on { width: 480px; padding-left: 23px; background: #fff; border-radius: 16px 16px 0 0; position: relative; }
.tab-on::before, .tab-on::after { content: ""; position: absolute; bottom: 0; width: 16px; height: 16px; }
.tab-on::before { left: -16px; background: radial-gradient(circle at 0 0, transparent 16px, #fff 16.5px); }
.tab-on::after { right: -16px; background: radial-gradient(circle at 100% 0, transparent 16px, #fff 16.5px); }
.fav { width: 32px; height: 32px; margin-right: 17px; }
.tab-t { flex: none; width: 366px; }
.tab-b .tab-t { width: 358px; letter-spacing: -.15px; -webkit-mask: linear-gradient(90deg, #000 300px, transparent 354px); margin-right: 8px; }
.tab-on .tab-t { width: 367px; letter-spacing: -.95px; line-height: 30px; padding-bottom: 2px; }
.x { width: 18px; height: 18px; fill: none; stroke: #3c4043; stroke-width: 3; }
.newtab { width: 56px; height: 56px; border-radius: 50%; background: #c0c2c7; margin: 6px 0 0 16px; padding: 16px; }
.newtab svg { width: 24px; height: 24px; stroke: #35373b; stroke-width: 4; }

.toolbar { height: 72px; display: flex; align-items: center; padding-left: 31px; }
.toolbar > svg { fill: none; stroke: #5b5f64; stroke-width: 3; }
.toolbar > .tb-back { width: 27px; height: 27px; margin-right: 37px; }
.toolbar > .tb-fwd { width: 27px; height: 27px; margin-right: 37px; }
.toolbar > .tb-load { width: 27px; height: 27px; margin-right: 30px; }
.toolbar .fill { fill: #5b5f64; stroke: none; }
.omnibox { width: 2384px; height: 56px; border-radius: 28px; background: #f1f3f4; display: flex; align-items: center; padding-left: 27px; font-size: 27px; }
.lock { width: 18px; height: 24px; margin-right: 23px; }
.url { width: 2265px; letter-spacing: .3px; }
.host { color: #202124; }
.path { color: #5f6368; }
.star { width: 30px; height: 28px; fill: none; stroke: #5f6368; stroke-width: 2.600; }
.toolbar > .tb-shield { width: 30px; height: 32px; margin-left: 29px; stroke: none; }
.toolbar > .tb-puz { width: 30px; height: 30px; margin-left: 35px; stroke: none; }
.toolbar > .tb-ava { width: 44px; height: 44px; margin-left: 26px; stroke: none; }
.toolbar > .tb-dots { width: 6px; height: 27px; margin-left: 39px; fill: #5f6368; stroke: none; }

.bookmarks { height: 66px; padding: 0 0 10px 31px; display: flex; align-items: center; font-size: 24px; color: #3c4043; border-bottom: 2px solid #dcdee1; }
.bm-apps { width: 26px; height: 26px; margin-right: 19px; }
.bm-t1 { width: 55px; font-size: 22px; line-height: 30px; }
.bm-tz { width: 31px; height: 20px; margin-right: 16px; }
.bm-t2 { width: 260px; letter-spacing: -.2px; }
.bm-al { width: 32px; height: 32px; margin-right: 16px; }
.bm-t3 { width: 109px; }
.bm-cl { width: 28px; height: 32px; margin-right: 18px; }

/* shop page */
.page { height: 1422px; position: relative; font-family: "Noto Sans", "Noto Sans CJK KR", sans-serif; }
.wrap { width: 1900px; margin-left: 490px; margin-right: 490px; }
.util { height: 60px; background: #fbfbfb; border-bottom: 2px solid #dce1e6; font-size: 22px; line-height: 30px; letter-spacing: -1.2px; }
.util-row { display: flex; justify-content: space-between; height: 58px; padding-top: 15px; }
.util-l, .util-r { display: flex; align-items: flex-start; }
.util-l { padding-left: 2px; }
.u1 { width: 62px; }
.off { width: 70px; height: 28px; margin-top: -1px; background: #b5b5b5; color: #fff; font-size: 25px; font-weight: 600; letter-spacing: .6px; text-align: center; line-height: 28px; margin-right: 40px; }
.u2 { width: 103px; letter-spacing: -.9px; }
.chev { width: 16px; height: 10px; margin-top: 10px; fill: none; stroke: #333; stroke-width: 3; }
.c1 { margin-right: 31px; }
.u3 { width: 84px; }
.util-r { padding-right: 8px; }
.util-r i { width: 2px; height: 20px; background: #ddd; margin: 3px 18px 0; }
.login { width: 82px; height: 38px; margin-top: -3px; border: 2px solid #dcdcdc; background: #fff; line-height: 34px; text-align: center; }
.ut { width: 76px; letter-spacing: -1.4px; }
.cart { position: relative; width: 69px; margin-left: 17px; margin-top: -3px; }
.cart svg { width: 44px; height: 36px; }
.cart b { position: absolute; left: 35px; top: -6px; width: 34px; height: 30px; border-radius: 15px; background: #e93a22; color: #fff; font-size: 22px; line-height: 30px; text-align: center; }

.head { height: 140px; display: flex; padding-top: 28px; }
.logo { width: 348px; padding: 9px 0 0 46px; }
.bird { width: 46px; height: 36px; margin-left: 94px; }
.wordmark { display: flex; align-items: center; height: 34px; color: #1c3f7c; gap: 8px; line-height: 34px; }
.w1 { font-size: 35px; width: 128px; letter-spacing: 1.600px; }
.w2 { font-size: 28px; font-weight: 900; }
.search { width: 860px; height: 80px; display: flex; }
.field { flex: 1; background: #fafafa; border: 2px solid #5f6c9b; border-right: 0; }
.go { width: 84px; background: #5f6c9b; padding: 15px 0 0 16px; }
.go svg { width: 52px; height: 52px; }

.banner { height: 140px; display: flex; background: #8c9bd7; border-bottom: 2px solid #1f50a5; }
.ban-t { width: 919px; padding-left: 37px; color: #fff; display: flex; }
.ban-t b { font-size: 71px; line-height: 80px; margin-top: 31px; width: 273px; letter-spacing: -2.600px; }
.ban-t span { font-size: 28px; line-height: 40px; margin-top: 71px; font-weight: 500; letter-spacing: .15px; }
.step { width: 245.500px; flex: none; position: relative; padding: 20px 0 0 36px; display: flex; flex-direction: column; align-items: center; color: #606da8; font-size: 28px; letter-spacing: .9px; }
.step.on { width: 244px; padding-left: 30px; color: #7482b8; }
.arrow { position: absolute; left: 0; top: 0; width: 40px; height: 138px; fill: none; stroke: #7987c2; stroke-width: 2.500; }
.arrow-on { position: absolute; left: 0; top: 0; width: 244px; height: 138px; }
.s-ic { width: 82px; height: 60px; position: relative; }
.sl { position: relative; line-height: 40px; margin-top: 8px; font-weight: 500; }
.notice { height: 62px; background: #dfe4ff; padding: 12px 0 0 40px; display: flex; font-size: 24px; line-height: 38px; letter-spacing: -1.750px; }
.notice span { width: 922px; }
.notice a { width: 102px; height: 40px; border: 2px solid #ccc; background: #fff; color: #666; text-align: center; line-height: 35px; }

.done { padding-top: 76px; border-bottom: 2px solid #ddd; height: 330px; display: flex; flex-direction: column; align-items: center; }
h1, h2, p { margin: 0; }
h1 { font-size: 60px; line-height: 58px; letter-spacing: -3.440px; padding-bottom: 2px; }
.order { width: 792px; height: 60px; margin-top: 24px; background: #f7f7f7; display: flex; padding: 10px 0 0 30px; font-size: 24px; line-height: 38px; letter-spacing: -1.740px; }
.no { width: 273px; flex: none; letter-spacing: -1.160px; }
.order i { width: 2px; height: 19px; flex: none; margin: 11px 20px 0 0; background: #ccc; }
.thx { width: 249px; flex: none; }
.detail { width: 188px; height: 40px; background: #5f6c9b; color: #fff; text-align: center; }
.done p { font-size: 24px; line-height: 30px; margin-top: 16px; letter-spacing: -1.600px; }
h2 { font-size: 44px; line-height: 50px; }
.h-pay { margin-top: 80px; margin-bottom: 26px; letter-spacing: -6.300px; }
.h-ship { margin-top: 103px; line-height: 46px; letter-spacing: -7.300px; }

.pay { display: grid; grid-template-columns: 534px 446px 448px 472px; grid-template-rows: 82px 150px 148px; border-top: 2px solid #8c9bd7; border-bottom: 2px solid #8c9bd7; }
.pay > div { border-right: 2px solid #c0cdfb; }
.pay > div:nth-child(4n) { border-right: 0; }
.pay > div:nth-child(-n+8) { border-bottom: 2px solid #c0cdfb; }
.th { background: #dfe4ff; padding-left: 40px; font-size: 28px; font-weight: 700; line-height: 76px; letter-spacing: -1.650px; }
.sum { position: relative; display: flex; justify-content: flex-end; align-items: baseline; padding-right: 40px; }
.num { font-size: 56px; line-height: 142px; letter-spacing: .7px; -webkit-text-stroke: 1.200px; }
.won { font-size: 26px; }
.total { color: #e75256; }
.op { position: absolute; right: -28px; top: 42px; width: 56px; height: 56px; fill: #5f6c9b; z-index: 1; }
.op path { stroke: #fff; stroke-width: 8; }
.det { background: #eeeff5; padding: 17px 40px 0; font-size: 24px; line-height: 44px; letter-spacing: -1.400px; }
.det p { display: flex; justify-content: space-between; }
.qty { letter-spacing: -2.200px; margin-right: -2px; }
.amt { letter-spacing: .2px; }
.toss { letter-spacing: -.8px; }

.jump { position: absolute; left: 2440px; top: 1270px; display: flex; flex-direction: column; gap: 4px; }
.jump a { width: 126px; height: 72px; border: 2px solid #ccc; background: #f9f9f9; padding: 22px 0 0 43px; }
.jump svg { width: 40px; height: 24px; fill: none; stroke: #666; stroke-width: 4; }
.shade { position: absolute; left: 0; right: 0; bottom: 0; height: 90px; background: linear-gradient(180deg, rgba(0,0,0,0), rgba(0,0,0,.07)); -webkit-mask: linear-gradient(90deg, transparent 0, #000 110px); }

/* dock */
.dock { width: 2744px; height: 104px; margin: 6px 0 0 68px; padding: 13px 0 0 5.500px; border-radius: 10px 10px 0 0; background: linear-gradient(90deg, #7b87b4 0, #7985c4 500px, #7987c6 1900px, #7f88b2 2744px); display: flex; flex: none; }
.app { width: 86.860px; flex: none; position: relative; display: flex; flex-direction: column; align-items: center; }
.app svg { width: 72px; height: 72px; }
.app.run::after { content: ""; width: 8px; height: 8px; border-radius: 50%; background: #050a4a; margin-top: 7px; }
.app em { position: absolute; left: 54px; top: -5px; width: 30px; height: 30px; border-radius: 50%; background: #e8493f; color: #fff; font-size: 19px; line-height: 30px; text-align: center; }
.split { width: 2px; height: 76px; background: #5a659c; margin: 1px 18px 0 20px; }
.petals rect { mix-blend-mode: multiply; }
.cal-m { font: 15px "Noto Sans CJK KR", sans-serif; fill: #fff; }
.cal-d { font: 34px Inter, sans-serif; fill: #222; }
.t3d { font: 700 12px Inter, sans-serif; fill: #54606b; }
.pages { font: 700 9px Inter, sans-serif; fill: #fff; }
.ps4 { font: 700 12px Inter, sans-serif; fill: #dce8ff; }
.talk { font: 900 17px Inter, sans-serif; fill: #f7df49; }
.word { font: 700 26px Inter, sans-serif; fill: #fff; }
```
